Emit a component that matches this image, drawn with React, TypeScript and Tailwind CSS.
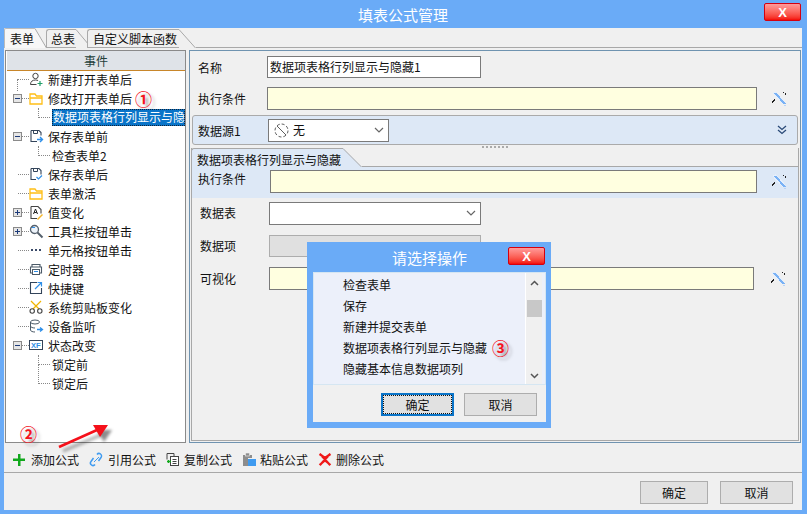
import React from 'react';

const CloseButton = () => (
  <div className="flex items-center justify-center w-[37px] h-[18px] rounded-[2px] border border-[#d4000f] bg-gradient-to-b from-[#ff9a9a] to-[#f40000] text-white font-bold text-[13px] leading-none font-['Liberation_Sans',sans-serif]">
    X
  </div>
);

const Wand = () => (
  <svg width="18" height="18" viewBox="0 0 18 18" shapeRendering="crispEdges">
    <path d="M4 2l10 11" stroke="#e6effb" strokeWidth="4" />
    <path d="M5 3l10 11" stroke="#7ab2f5" strokeWidth="2" />
    <path d="M2 12l3-2" stroke="#222" strokeWidth="1.5" />
    <rect x="13" y="2" width="1" height="1" fill="#222" />
    <rect x="15" y="3" width="1" height="2" fill="#222" />
    <rect x="14" y="15" width="2" height="1" fill="#b9d4f7" />
  </svg>
);

const Chevron = () => (
  <svg width="10" height="6" viewBox="0 0 10 6">
    <path d="M1 1l4 4 4-4" fill="none" stroke="#666" strokeWidth="1.2" />
  </svg>
);

const Minus = ({ plus }: { plus?: boolean }) => (
  <svg width="9" height="9" viewBox="0 0 9 9" shapeRendering="crispEdges">
    <rect x="0.5" y="0.5" width="8" height="8" fill="#e6e6e6" stroke="#8a8a8a" />
    <rect x="2" y="4" width="5" height="1" fill="#1c3a78" />
    {plus && <rect x="4" y="2" width="1" height="5" fill="#1c3a78" />}
  </svg>
);

const icons: Record<string, React.ReactNode> = {
  user: (
    <>
      <circle cx="6.5" cy="4" r="2.7" fill="none" stroke="#444" />
      <path d="M1.5 12.5c0-3 2-4.5 5-4.5 1.2 0 2 .2 2.6.6M1.5 12.5h6" fill="none" stroke="#444" />
      <path d="M11 9v5M8.5 11.5h5" stroke="#22a06b" strokeWidth="1.2" />
    </>
  ),
  folder: (
    <path d="M1 3h5l1.5 2H13v8H1zM1 7h12" fill="none" stroke="#ffbf16" strokeWidth="1.3" />
  ),
  saveTo: (
    <>
      <path d="M2 1.5h8l2 2v3M2 1.5v11h6" fill="none" stroke="#33445a" strokeWidth="1.1" />
      <path d="M4.5 1.5v3h4v-3" fill="none" stroke="#33445a" />
      <path d="M8 10.5h5M11 8l2.5 2.5L11 13" fill="none" stroke="#2f8fe8" strokeWidth="1.4" />
    </>
  ),
  saveOk: (
    <>
      <path d="M2 1.5h8l2 2v4M2 1.5v11h5" fill="none" stroke="#33445a" strokeWidth="1.1" />
      <path d="M4.5 1.5v3h4v-3" fill="none" stroke="#33445a" />
      <path d="M7.5 10l2 2 3.5-3.5" fill="none" stroke="#2f8fe8" strokeWidth="1.2" />
    </>
  ),
  value: (
    <>
      <path d="M2 1.5h7l3 3v4M2 1.5v12h6" fill="none" stroke="#444" strokeWidth="1.1" />
      <path d="M4.5 9l2-5 2 5M5.2 7.5h2.6" fill="none" stroke="#222" />
      <path d="M8 14l5-5 1 1-5 5z" fill="#f5b52a" />
    </>
  ),
  tool: (
    <>
      <circle cx="5.5" cy="5.5" r="4" fill="#eef4fb" stroke="#55606c" strokeWidth="1.3" />
      <path d="M8.5 8.5l5 5" stroke="#55606c" strokeWidth="2" />
      <path d="M3 3.5h3" stroke="#2f8fe8" />
    </>
  ),
  dots: (
    <g fill="#3a4a68">
      <rect x="2" y="6" width="2" height="2" />
      <rect x="6" y="6" width="2" height="2" />
      <rect x="10" y="6" width="2" height="2" />
    </g>
  ),
  timer: (
    <>
      <path d="M3 5V2.5h8V5M1.5 5h11v6h-11z" fill="none" stroke="#4b5a68" strokeWidth="1.1" />
      <rect x="3.5" y="7.5" width="7" height="5" fill="#fff" stroke="#4b5a68" />
      <path d="M5 9.5h4" stroke="#2f8fe8" />
    </>
  ),
  link: (
    <>
      <path d="M8 1.5H1.5v11h11V7" fill="none" stroke="#33445a" strokeWidth="1.1" />
      <path d="M6 8l6-6M8.5 1.5h4v4" fill="none" stroke="#2f8fe8" strokeWidth="1.2" />
    </>
  ),
  scissors: (
    <>
      <path d="M2 1l8 8M12 1L4 9" stroke="#f0b400" strokeWidth="1.2" />
      <circle cx="3.2" cy="11" r="2.2" fill="none" stroke="#444" strokeWidth="1.1" />
      <circle cx="10.8" cy="11" r="2.2" fill="none" stroke="#444" strokeWidth="1.1" />
    </>
  ),
  db: (
    <>
      <ellipse cx="6" cy="3" rx="4.5" ry="2" fill="none" stroke="#4b5a68" />
      <path d="M1.5 3v8c0 1.2 2 2 4.5 2M1.5 7c0 1.2 2 2 4.5 2" fill="none" stroke="#4b5a68" />
      <path d="M8 10.5h5M11 8.5l2.5 2-2.5 2" fill="none" stroke="#2f8fe8" strokeWidth="1.3" />
    </>
  ),
  xf: (
    <>
      <rect x="0.5" y="2.5" width="13" height="9" fill="#fff" stroke="#33445a" />
      <text x="2" y="10" fontSize="7.5" fontWeight="700" fill="#2f8fe8" fontFamily="Liberation Sans, sans-serif">XF</text>
    </>
  ),
};

type Node = { label: string; icon?: string; fold?: 'minus' | 'plus'; child?: boolean; selected?: boolean; tall?: boolean; mark?: boolean; trunk?: boolean };

const nodes: Node[] = [
  { label: '新建打开表单后', icon: 'user', trunk: true },
  { label: '修改打开表单后', icon: 'folder', fold: 'minus', mark: true },
  { label: '数据项表格行列显示与隐藏', child: true, selected: true },
  { label: '保存表单前', icon: 'saveTo', fold: 'minus' },
  { label: '检查表单2', child: true },
  { label: '保存表单后', icon: 'saveOk' },
  { label: '表单激活', icon: 'folder' },
  { label: '值变化', icon: 'value', fold: 'plus' },
  { label: '工具栏按钮单击', icon: 'tool', fold: 'plus' },
  { label: '单元格按钮单击', icon: 'dots' },
  { label: '定时器', icon: 'timer' },
  { label: '快捷键', icon: 'link' },
  { label: '系统剪贴板变化', icon: 'scissors' },
  { label: '设备监听', icon: 'db' },
  { label: '状态改变', icon: 'xf', fold: 'minus' },
  { label: '锁定前', child: true },
  { label: '锁定后', child: true, tall: true },
];

const TreeRow = ({ node }: { node: Node }) => {
  if (node.child) {
    return (
      <div className="relative flex items-center h-[19px] pl-[46px] whitespace-nowrap">
        <div className={`absolute left-[32px] bottom-[9px] w-[12px] border-l border-b border-dotted border-[#888] ${node.tall ? 'h-[19px]' : 'h-[10px]'}`} />
        {node.selected ? (
          <div className="flex-1 h-[17px] leading-[16px] pl-[1px] bg-[#0a74c8] text-white outline outline-1 -outline-offset-1 outline-dotted outline-[#10243a] overflow-hidden">
            {node.label}
          </div>
        ) : (
          <span>{node.label}</span>
        )}
      </div>
    );
  }
  return (
    <div className="relative flex items-center h-[19px] whitespace-nowrap">
      {node.trunk && <div className="absolute left-[11px] top-[9px] h-[12px] border-l border-dotted border-[#888]" />}
      {node.fold ? (
        <div className="flex items-center ml-[7px]">
          <Minus plus={node.fold === 'plus'} />
          <div className="w-[7px] border-t border-dotted border-[#888]" />
        </div>
      ) : (
        <div className="ml-[12px] w-[11px] border-t border-dotted border-[#888]" />
      )}
      <svg width="15" height="15" viewBox="0 0 15 15" className="shrink-0">{icons[node.icon!]}</svg>
      <span className="ml-[4px]">{node.label}</span>
      {node.mark && <Mark className="ml-[3px]">①</Mark>}
    </div>
  );
};

const Mark = ({ children, className = '' }: { children: React.ReactNode; className?: string }) => (
  <span className={`inline-block h-[16px] leading-[16px] text-[17px] font-bold text-[#f5141e] [text-shadow:3px_3px_3px_rgba(0,0,0,0.35)] ${className}`}>
    {children}
  </span>
);

const Input = ({ className = '', children }: { className?: string; children?: React.ReactNode }) => (
  <div className={`flex items-center border border-[#7a7a7a] shrink-0 ${className}`}>{children}</div>
);

const Slant = ({ w, h, fill }: { w: number; h: number; fill: string }) => (
  <svg width={w} height={h} viewBox={`0 0 ${w} ${h}`} className="shrink-0">
    <path d={`M0 0L${w} ${h}H0z`} fill={fill} />
    <path d={`M0 0.5L${w - 0.5} ${h}`} stroke="#a8a8a8" fill="none" />
  </svg>
);

const Tabs = () => (
  <div className="flex items-end h-[20px]">
    <div className="flex items-center h-[20px] pl-[5px] w-[31px] bg-[#f7f7f7] border-t border-l border-[#bbb] rounded-tl-[2px]">表单</div>
    <Slant w={12} h={20} fill="#f7f7f7" />
    <div className="flex items-center h-[19px] -ml-[1px] pl-[4px] w-[30px] border-t border-l border-b border-[#aaa] rounded-tl-[3px]">总表</div>
    <Slant w={16} h={19} fill="#f0f0f0" />
    <div className="relative -ml-[5px] flex items-center h-[19px] pl-[5px] w-[92px] bg-[#f0f0f0] border-t border-l border-b border-[#aaa] rounded-tl-[3px] whitespace-nowrap">自定义脚本函数</div>
    <Slant w={17} h={19} fill="#f0f0f0" />
    <div className="flex-1 h-[1px] bg-[#a8a8a8]" />
  </div>
);

const Tree = () => (
  <div className="w-[181px] shrink-0 border border-[#8a8a8a] bg-white mt-[2px] overflow-hidden">
    <div className="h-[20px] ml-[1px] bg-[#dfe3e8] border-b border-[#c8862a] flex items-center justify-center text-[#24403a]">事件</div>
    <div className="-mt-[1px]">
      {nodes.map((node) => (
        <TreeRow key={node.label} node={node} />
      ))}
    </div>
  </div>
);

const FormPanel = () => (
  <div className="w-[612px] ml-[3px] mt-[2px] mb-[0px] border border-[#6f93b0] flex flex-col">
    <div className="flex items-center h-[22px] mt-[5px] pl-[8px]">
      <span className="w-[69px] pt-[2px]">名称</span>
      <Input className="w-[214px] h-[22px] bg-white pl-[2px] whitespace-nowrap">数据项表格行列显示与隐藏1</Input>
    </div>
    <div className="flex items-center h-[23px] mt-[9px] pl-[8px]">
      <span className="w-[69px]">执行条件</span>
      <Input className="w-[490px] h-[23px] bg-[#ffffe0]" />
      <span className="ml-[13px]"><Wand /></span>
    </div>
    <div className="flex items-center h-[30px] mt-[5px] mx-[2px] pl-[5px] bg-[#dde8f6] border border-[#aaa] rounded-[3px]">
      <span className="w-[70px] pt-[2px]">数据源1</span>
      <Input className="w-[121px] h-[23px] bg-white pl-[5px] pr-[4px]">
        <svg width="15" height="15" viewBox="0 0 15 15">
          <circle cx="7.5" cy="7.5" r="6.5" fill="none" stroke="#333" strokeWidth="0.8" strokeDasharray="3 2" />
          <path d="M3 3l9 9" stroke="#333" strokeWidth="0.8" />
        </svg>
        <span className="ml-[4px] flex-1">无</span>
        <Chevron />
      </Input>
      <svg width="10" height="10" viewBox="0 0 10 10" className="ml-auto mr-[10px]">
        <path d="M1 1l4 3.5L9 1M1 5l4 3.5L9 5" fill="none" stroke="#2a4a78" strokeWidth="1.3" />
      </svg>
    </div>
    <div className="h-[3px] flex items-center justify-center">
      <div className="w-[26px] border-t-2 border-dotted border-[#aaa]" />
    </div>
    <div className="flex-1 flex flex-col mx-[1px] mb-[1px] border-x border-b border-[#a8a8a8]">
      <div className="flex items-end h-[19px] -mx-[1px]">
        <div className="flex items-center w-[152px] h-[19px] pl-[5px] pt-[3px] bg-[#dde8f6] border-t border-l border-[#a8a8a8] rounded-tl-[3px] whitespace-nowrap">数据项表格行列显示与隐藏</div>
        <Slant w={19} h={19} fill="#dde8f6" />
        <div className="flex-1 h-[1px] bg-[#a8a8a8]" />
      </div>
      <div className="flex items-center h-[31px] pl-[6px] pb-[2px] bg-[#dde8f6]">
        <span className="w-[72px] pb-[6px]">执行条件</span>
        <Input className="w-[487px] h-[23px] bg-[#ffffe0]" />
        <span className="ml-[13px]"><Wand /></span>
      </div>
      <div className="flex items-center h-[24px] mt-[3px] pl-[8px]">
        <span className="w-[69px]">数据表</span>
        <Input className="w-[212px] h-[23px] bg-white justify-end pr-[4px]"><Chevron /></Input>
      </div>
      <div className="flex items-center h-[22px] mt-[10px] pl-[8px]">
        <span className="w-[69px]">数据项</span>
        <div className="w-[212px] h-[22px] bg-[#e0e0e0] border border-[#adadad]" />
      </div>
      <div className="flex items-center h-[23px] mt-[10px] pl-[8px]">
        <span className="w-[69px]">可视化</span>
        <Input className="w-[485px] h-[23px] bg-[#ffffe0]" />
        <span className="ml-[15px]"><Wand /></span>
      </div>
    </div>
  </div>
);

const tools: { label: string; icon: React.ReactNode; gap: string }[] = [
  {
    label: '添加公式',
    gap: 'ml-[5px]',
    icon: <path d="M6 1h2.5v4.5H13V8H8.5v5H6V8H1V5.5h5z" transform="translate(0 1)" fill="#11a81c" />,
  },
  {
    label: '引用公式',
    gap: 'ml-[5px]',
    icon: (
      <>
        <path d="M8 2.5a2.5 2.5 0 0 1 4 3L9.5 9M6 12.5a2.5 2.5 0 0 1-4-3L4.5 6" fill="none" stroke="#3f9bf0" strokeWidth="1.5" />
        <path d="M5 10l5-5" stroke="#3f9bf0" />
      </>
    ),
  },
  {
    label: '复制公式',
    gap: 'ml-[4px]',
    icon: (
      <>
        <path d="M1 1.5h7v3M1 1.5v6" fill="none" stroke="#444" />
        <rect x="4.5" y="4.5" width="8" height="9" fill="#fff" stroke="#444" />
        <path d="M6.5 7.5h4M6.5 9.5h4M6.5 11.5h4" stroke="#444" />
        <path d="M1 9.5h4M2.5 8v3" stroke="#11a81c" strokeWidth="1.3" />
      </>
    ),
  },
  {
    label: '粘贴公式',
    gap: 'ml-[4px]',
    icon: (
      <>
        <path d="M1 3h9v3H6v8H1z" fill="#8d8d8d" />
        <rect x="3.5" y="1" width="4" height="3" fill="#8d8d8d" stroke="#f0f0f0" strokeWidth="0.6" />
        <rect x="6" y="7" width="8" height="7" fill="#3f9bf0" />
      </>
    ),
  },
  {
    label: '删除公式',
    gap: 'ml-[4px]',
    icon: <path d="M1.5 2L7 6 12.5 2M1.5 13L7 8.5l5.5 4.5M2 2l10 11M12 2L2 13" stroke="#ef1818" strokeWidth="2.2" fill="none" />,
  },
];

const Toolbar = () => (
  <div className="flex items-center h-[29px] pl-[8px] pt-[4px] gap-[10px] shrink-0">
    {tools.map((t) => (
      <div key={t.label} className="flex items-center whitespace-nowrap">
        <svg width="14" height="15" viewBox="0 0 14 15" className="shrink-0">{t.icon}</svg>
        <span className={t.gap}>{t.label}</span>
      </div>
    ))}
  </div>
);

const Btn = ({ label, className = '' }: { label: string; className?: string }) => (
  <div className={`flex items-center justify-center bg-[#e1e1e1] border border-[#adadad] ${className}`}>{label}</div>
);

const Dialog = () => (
  <div className="absolute left-[307px] top-[242px] w-[244px] h-[186px] bg-[#6aabf7] flex flex-col pl-[6px] pr-[5px] pb-[6px]">
    <div className="relative h-[30px] flex items-center justify-center text-white text-[15px] shrink-0">
      请选择操作
      <div className="absolute right-[1px] top-[5px]"><CloseButton /></div>
    </div>
    <div className="flex-1 bg-[#f0f0f0] flex flex-col">
      <div className="relative h-[113px] bg-[#ecf0fa] border border-[#d5e6f2] flex pl-[29px] shrink-0">
        <div className="flex-1 pt-[1px]">
          {['检查表单', '保存', '新建并提交表单', '数据项表格行列显示与隐藏', '隐藏基本信息数据项列'].map((s, i) => (
            <div key={s} className="flex items-center h-[21px] whitespace-nowrap">
              {s}
              {i === 3 && <Mark className="ml-[5px]">③</Mark>}
            </div>
          ))}
        </div>
        <div className="w-[17px] mr-[3px] bg-[#f0f0f0] border-l border-white flex flex-col items-center pt-[7px]">
          <svg width="9" height="6" viewBox="0 0 9 6"><path d="M1 5l3.5-3.5L8 5" fill="none" stroke="#555" strokeWidth="1.5" /></svg>
          <div className="w-[15px] h-[17px] bg-[#c8c8c8] mt-[14px]" />
          <svg width="9" height="6" viewBox="0 0 9 6" className="mt-auto mb-[5px]"><path d="M1 1l3.5 3.5L8 1" fill="none" stroke="#555" strokeWidth="1.5" /></svg>
        </div>
      </div>
      <div className="flex justify-end gap-[10px] pr-[9px] pt-[8px]">
        <div className="w-[73px] h-[23px] bg-[#e1e1e1] border-2 border-[#0a74c8] flex items-center justify-center outline outline-1 -outline-offset-3 outline-dotted outline-[#111]">确定</div>
        <Btn label="取消" className="w-[73px] h-[23px]" />
      </div>
    </div>
  </div>
);

const App = () => {
  return (
    <div className="relative w-[807px] h-[514px] overflow-hidden bg-[#6aabf7] flex flex-col text-[12px] leading-none text-[#111] font-['Noto_Sans_CJK_SC','Liberation_Sans',sans-serif]">
      <div className="relative h-[28px] flex items-center justify-center text-white text-[15px] shrink-0 pr-[1px]">
        填表公式管理
        <div className="absolute left-[764px] top-[3px]"><CloseButton /></div>
      </div>
      <div className="ml-[4px] mr-[5px] mb-[4px] flex-1 bg-[#f0f0f0] flex flex-col min-h-0">
        <Tabs />
        <div className="flex h-[395px] pl-[1px] shrink-0">
          <Tree />
          <FormPanel />
        </div>
        <Toolbar />
        <div className="flex-1 border-t border-[#a8a8a8] flex justify-end gap-[12px] pt-[8px] pr-[9px]">
          <Btn label="确定" className="w-[68px] h-[23px]" />
          <Btn label="取消" className="w-[73px] h-[23px]" />
        </div>
      </div>
      <Mark className="absolute left-[20px] top-[426px]">②</Mark>
      <svg width="70" height="40" viewBox="0 0 70 40" className="absolute left-[50px] top-[418px]">
        <g className="blur-[1.5px]">
          <path d="M13 33L51 17" stroke="rgba(0,0,0,0.3)" strokeWidth="3" />
          <path d="M47 12h15l-8 12z" fill="rgba(0,0,0,0.45)" />
        </g>
        <path d="M9 29L47 12" stroke="#f5101a" strokeWidth="2.5" />
        <path d="M43 7h15l-8 12z" fill="#f5101a" />
      </svg>
      <Dialog />
    </div>
  );
};

export default App;
